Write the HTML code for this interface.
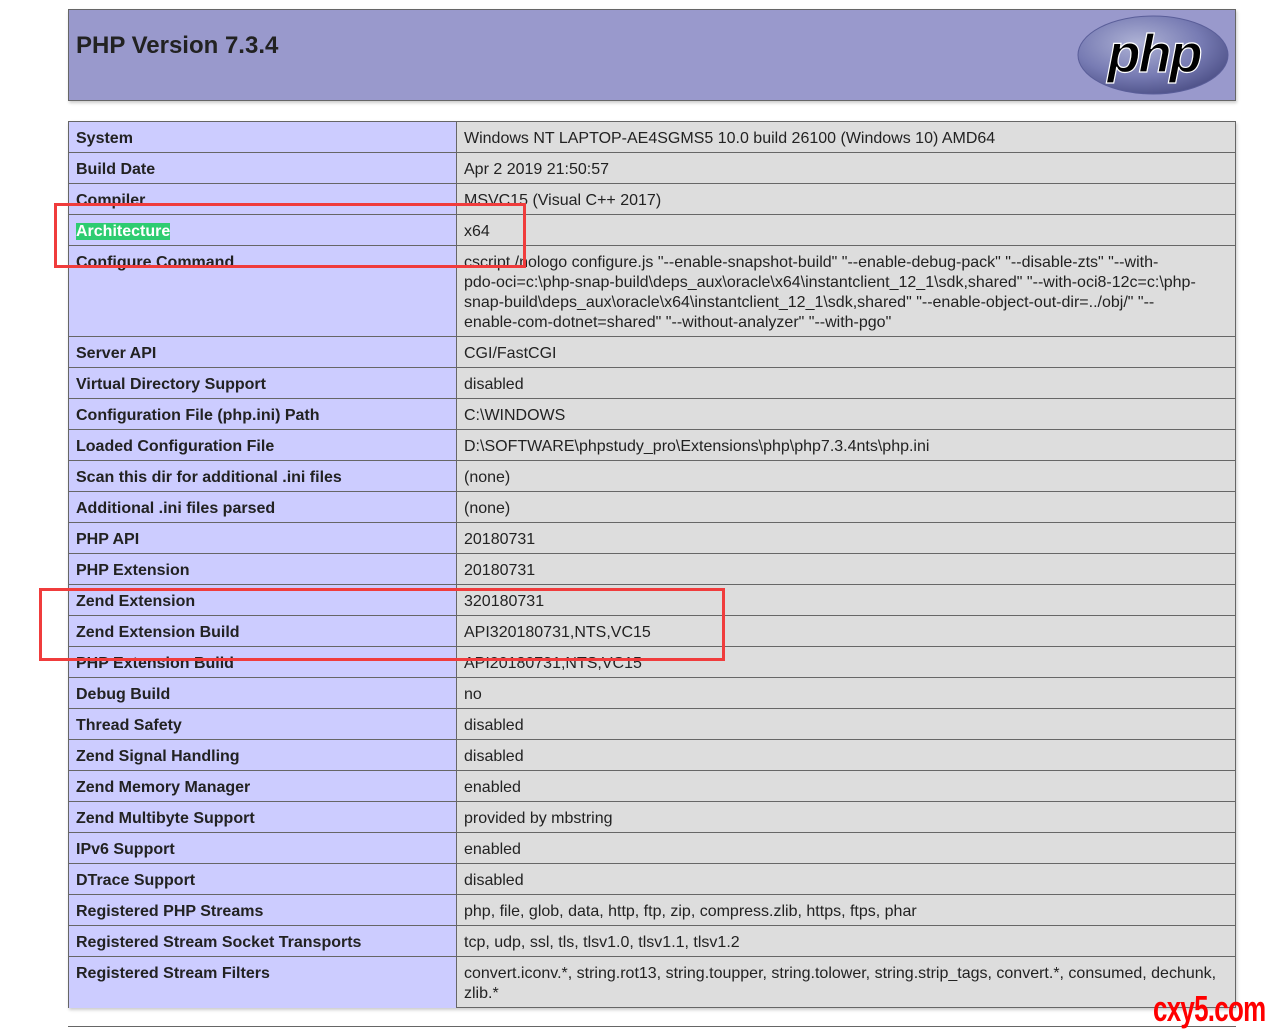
<!DOCTYPE html>
<html><head><meta charset="utf-8"><style>
body{margin:0;background:#fff;width:1273px;height:1029px;position:relative;overflow:hidden;font-family:"Liberation Sans","DejaVu Sans",sans-serif;color:#222;font-size:16px}
.hdr{position:absolute;left:68px;top:9px;width:1166px;height:90px;background:#9999cc;border:1px solid #666;box-shadow:1px 2px 3px #ccc}
.hdr h1{margin:0;position:absolute;left:7px;top:22px;font-size:24px;font-weight:bold;color:#222}
.tbl{position:absolute;left:68px;top:121px;width:1166px;height:885px;border:1px solid #666;background:#ddd;box-shadow:1px 2px 3px #ccc}
.r{position:absolute;left:0;width:1166px;border-top:1px solid #666}
.r:first-child{border-top:none}
.e{position:absolute;left:0;top:0;bottom:0;width:388px;background:#ccccff;border-right:1px solid #666;font-weight:bold;padding-left:7px;box-sizing:border-box}
.v{position:absolute;left:395px;top:0;white-space:nowrap;line-height:20px}
.e span,.v{padding-top:7px}
.e span{display:block;line-height:20px}
.red{position:absolute;border:3px solid #f03c3c;box-sizing:border-box}
.wm{position:absolute;left:1153px;top:988px;color:#f00;font-weight:bold;font-size:36px;font-family:"Liberation Sans Narrow","Liberation Sans",sans-serif;transform:scaleX(0.72);transform-origin:left;letter-spacing:-1px;white-space:nowrap}
hr{position:absolute;left:68px;top:1026px;width:1168px;margin:0;border:none;border-top:1px solid #666}
</style></head><body>
<div class="hdr"><h1>PHP Version 7.3.4</h1>
<svg style="position:absolute;left:1008px;top:5px" width="153" height="80" viewBox="0 0 153 80">
<defs><radialGradient id="g" cx="40%" cy="35%" r="70%"><stop offset="0" stop-color="#aeb2d5"/><stop offset="0.6" stop-color="#777bb3"/><stop offset="1" stop-color="#4c4f86"/></radialGradient></defs>
<ellipse cx="76" cy="40" rx="75" ry="39" fill="url(#g)" stroke="#5a5e99"/>
<text x="77" y="57" text-anchor="middle" font-family="Liberation Sans" font-weight="bold" font-style="italic" font-size="54" fill="#000" stroke="#fff" stroke-width="1.2" letter-spacing="-2">php</text>
</svg></div>
<div class="tbl">
<div class="r" style="top:0;height:30px"><div class="e"><span>System</span></div><div class="v">Windows NT LAPTOP-AE4SGMS5 10.0 build 26100 (Windows 10) AMD64</div></div>
<div class="r" style="top:30px;height:30px"><div class="e"><span>Build Date</span></div><div class="v">Apr 2 2019 21:50:57</div></div>
<div class="r" style="top:61px;height:30px"><div class="e"><span>Compiler</span></div><div class="v">MSVC15 (Visual C++ 2017)</div></div>
<div class="r" style="top:92px;height:30px"><div class="e"><span><b style="background:#2ecc71;color:#fff">Architecture</b></span></div><div class="v">x64</div></div>
<div class="r" style="top:123px;height:90px"><div class="e"><span>Configure Command</span></div><div class="v">cscript /nologo configure.js "--enable-snapshot-build" "--enable-debug-pack" "--disable-zts" "--with-<br>pdo-oci=c:\php-snap-build\deps_aux\oracle\x64\instantclient_12_1\sdk,shared" "--with-oci8-12c=c:\php-<br>snap-build\deps_aux\oracle\x64\instantclient_12_1\sdk,shared" "--enable-object-out-dir=../obj/" "--<br>enable-com-dotnet=shared" "--without-analyzer" "--with-pgo"</div></div>
<div class="r" style="top:214px;height:30px"><div class="e"><span>Server API</span></div><div class="v">CGI/FastCGI</div></div>
<div class="r" style="top:245px;height:30px"><div class="e"><span>Virtual Directory Support</span></div><div class="v">disabled</div></div>
<div class="r" style="top:276px;height:30px"><div class="e"><span>Configuration File (php.ini) Path</span></div><div class="v">C:\WINDOWS</div></div>
<div class="r" style="top:307px;height:30px"><div class="e"><span>Loaded Configuration File</span></div><div class="v">D:\SOFTWARE\phpstudy_pro\Extensions\php\php7.3.4nts\php.ini</div></div>
<div class="r" style="top:338px;height:30px"><div class="e"><span>Scan this dir for additional .ini files</span></div><div class="v">(none)</div></div>
<div class="r" style="top:369px;height:30px"><div class="e"><span>Additional .ini files parsed</span></div><div class="v">(none)</div></div>
<div class="r" style="top:400px;height:30px"><div class="e"><span>PHP API</span></div><div class="v">20180731</div></div>
<div class="r" style="top:431px;height:30px"><div class="e"><span>PHP Extension</span></div><div class="v">20180731</div></div>
<div class="r" style="top:462px;height:30px"><div class="e"><span>Zend Extension</span></div><div class="v">320180731</div></div>
<div class="r" style="top:493px;height:30px"><div class="e"><span>Zend Extension Build</span></div><div class="v">API320180731,NTS,VC15</div></div>
<div class="r" style="top:524px;height:30px"><div class="e"><span>PHP Extension Build</span></div><div class="v">API20180731,NTS,VC15</div></div>
<div class="r" style="top:555px;height:30px"><div class="e"><span>Debug Build</span></div><div class="v">no</div></div>
<div class="r" style="top:586px;height:30px"><div class="e"><span>Thread Safety</span></div><div class="v">disabled</div></div>
<div class="r" style="top:617px;height:30px"><div class="e"><span>Zend Signal Handling</span></div><div class="v">disabled</div></div>
<div class="r" style="top:648px;height:30px"><div class="e"><span>Zend Memory Manager</span></div><div class="v">enabled</div></div>
<div class="r" style="top:679px;height:30px"><div class="e"><span>Zend Multibyte Support</span></div><div class="v">provided by mbstring</div></div>
<div class="r" style="top:710px;height:30px"><div class="e"><span>IPv6 Support</span></div><div class="v">enabled</div></div>
<div class="r" style="top:741px;height:30px"><div class="e"><span>DTrace Support</span></div><div class="v">disabled</div></div>
<div class="r" style="top:772px;height:30px"><div class="e"><span>Registered PHP Streams</span></div><div class="v">php, file, glob, data, http, ftp, zip, compress.zlib, https, ftps, phar</div></div>
<div class="r" style="top:803px;height:30px"><div class="e"><span>Registered Stream Socket Transports</span></div><div class="v">tcp, udp, ssl, tls, tlsv1.0, tlsv1.1, tlsv1.2</div></div>
<div class="r" style="top:834px;height:51px"><div class="e"><span>Registered Stream Filters</span></div><div class="v">convert.iconv.*, string.rot13, string.toupper, string.tolower, string.strip_tags, convert.*, consumed, dechunk,<br>zlib.*</div></div>
</div>
<div class="red" style="left:54px;top:203px;width:472px;height:65px"></div>
<div class="red" style="left:39px;top:588px;width:686px;height:73px"></div>
<hr>
<div class="wm">cxy5.com</div>
</body></html>
